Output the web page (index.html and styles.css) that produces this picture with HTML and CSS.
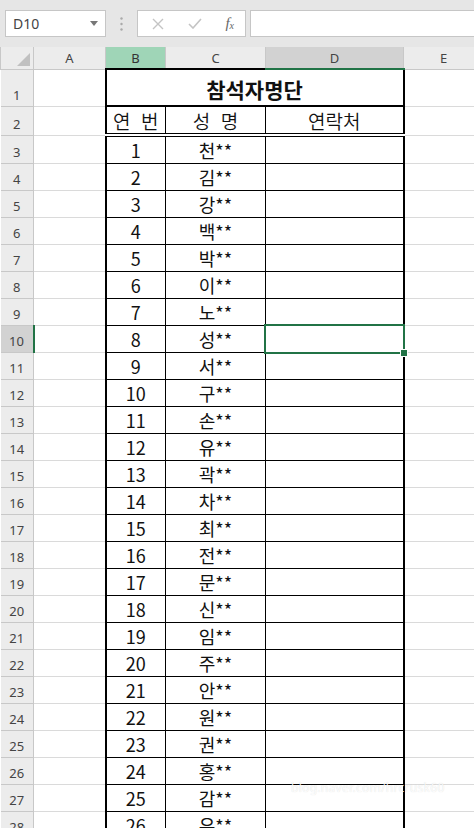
FILE: index.html
```html
<!DOCTYPE html>
<html lang="ko">
<head>
    <meta charset="UTF-8">
    <meta name="viewport" content="width=device-width, initial-scale=1.0">
    <title>참석자명단</title>
    <link rel="stylesheet" href="styles.css">
</head>
<body>

    <div class="toolbar">
        <div class="namebox">
            <span>D10</span>
            <svg class="dropdown" width="8" height="5" viewBox="0 0 8 5"><path d="M0 0h8L4 5z" fill="#777"/></svg>
        </div>
        <div class="grip">
            <svg width="3" height="14" viewBox="0 0 3 14"><circle cx="1.5" cy="1.5" r="1.2" fill="#aaa"/><circle cx="1.5" cy="7" r="1.2" fill="#aaa"/><circle cx="1.5" cy="12.5" r="1.2" fill="#aaa"/></svg>
        </div>
        <div class="fx-buttons">
            <svg width="12" height="12" viewBox="0 0 12 12"><path d="M1 1l10 10M11 1L1 11" stroke="#c4c4c4" stroke-width="1.4"/></svg>
            <svg width="14" height="11" viewBox="0 0 14 11"><path d="M1 6l4 4 8-9" stroke="#c4c4c4" stroke-width="1.6" fill="none"/></svg>
            <span class="fx">f<sub>x</sub></span>
        </div>
        <div class="formula"></div>
    </div>

    <table class="sheet">
        <colgroup>
            <col class="c-head">
            <col class="c-a">
            <col class="c-b">
            <col class="c-c">
            <col class="c-d">
            <col class="c-e">
        </colgroup>
        <thead>
            <tr>
                <th class="corner"><span class="tri"></span></th>
                <th>A</th>
                <th class="col-sel">B</th>
                <th>C</th>
                <th class="col-active">D</th>
                <th>E</th>
            </tr>
        </thead>
        <tbody>
            <tr class="r-title">
                <th>1</th><td></td>
                <td colspan="3" class="title">참석자명단</td>
                <td></td>
            </tr>
            <tr class="r-head">
                <th>2</th><td></td>
                <td class="t-left">연&nbsp;&nbsp;번</td><td class="t-mid">성&nbsp;&nbsp;명</td><td class="t-right">연락처</td>
                <td></td>
            </tr>
            <tr><th>3</th><td></td><td class="t-left">1</td><td class="t-mid">천**</td><td class="t-right"></td><td></td></tr>
            <tr><th>4</th><td></td><td class="t-left">2</td><td class="t-mid">김**</td><td class="t-right"></td><td></td></tr>
            <tr><th>5</th><td></td><td class="t-left">3</td><td class="t-mid">강**</td><td class="t-right"></td><td></td></tr>
            <tr><th>6</th><td></td><td class="t-left">4</td><td class="t-mid">백**</td><td class="t-right"></td><td></td></tr>
            <tr><th>7</th><td></td><td class="t-left">5</td><td class="t-mid">박**</td><td class="t-right"></td><td></td></tr>
            <tr><th>8</th><td></td><td class="t-left">6</td><td class="t-mid">이**</td><td class="t-right"></td><td></td></tr>
            <tr><th>9</th><td></td><td class="t-left">7</td><td class="t-mid">노**</td><td class="t-right"></td><td></td></tr>
            <tr><th class="row-active">10</th><td></td><td class="t-left">8</td><td class="t-mid">성**</td><td class="t-right selected"></td><td></td></tr>
            <tr><th>11</th><td></td><td class="t-left">9</td><td class="t-mid">서**</td><td class="t-right"></td><td></td></tr>
            <tr><th>12</th><td></td><td class="t-left">10</td><td class="t-mid">구**</td><td class="t-right"></td><td></td></tr>
            <tr><th>13</th><td></td><td class="t-left">11</td><td class="t-mid">손**</td><td class="t-right"></td><td></td></tr>
            <tr><th>14</th><td></td><td class="t-left">12</td><td class="t-mid">유**</td><td class="t-right"></td><td></td></tr>
            <tr><th>15</th><td></td><td class="t-left">13</td><td class="t-mid">곽**</td><td class="t-right"></td><td></td></tr>
            <tr><th>16</th><td></td><td class="t-left">14</td><td class="t-mid">차**</td><td class="t-right"></td><td></td></tr>
            <tr><th>17</th><td></td><td class="t-left">15</td><td class="t-mid">최**</td><td class="t-right"></td><td></td></tr>
            <tr><th>18</th><td></td><td class="t-left">16</td><td class="t-mid">전**</td><td class="t-right"></td><td></td></tr>
            <tr><th>19</th><td></td><td class="t-left">17</td><td class="t-mid">문**</td><td class="t-right"></td><td></td></tr>
            <tr><th>20</th><td></td><td class="t-left">18</td><td class="t-mid">신**</td><td class="t-right"></td><td></td></tr>
            <tr><th>21</th><td></td><td class="t-left">19</td><td class="t-mid">임**</td><td class="t-right"></td><td></td></tr>
            <tr><th>22</th><td></td><td class="t-left">20</td><td class="t-mid">주**</td><td class="t-right"></td><td></td></tr>
            <tr><th>23</th><td></td><td class="t-left">21</td><td class="t-mid">안**</td><td class="t-right"></td><td></td></tr>
            <tr><th>24</th><td></td><td class="t-left">22</td><td class="t-mid">원**</td><td class="t-right"></td><td></td></tr>
            <tr><th>25</th><td></td><td class="t-left">23</td><td class="t-mid">권**</td><td class="t-right"></td><td></td></tr>
            <tr><th>26</th><td></td><td class="t-left">24</td><td class="t-mid">홍**</td><td class="t-right"></td><td></td></tr>
            <tr><th>27</th><td></td><td class="t-left">25</td><td class="t-mid">감**</td><td class="t-right"></td><td></td></tr>
            <tr><th>28</th><td></td><td class="t-left">26</td><td class="t-mid">유**</td><td class="t-right"></td><td></td></tr>
        </tbody>
    </table>

    <div class="watermark">blog.naver.com/hrcrusk60</div>

</body>
</html>
```

FILE: styles.css
```css
body {
    margin: 0;
    width: 474px;
    height: 828px;
    overflow: hidden;
    background: #fff;
    font-family: "Noto Sans", "Noto Sans CJK KR", sans-serif;
    position: relative;
}

/* formula bar */
.toolbar {
    display: flex;
    align-items: flex-start;
    height: 47px;
    box-sizing: border-box;
    padding: 10px 0 0 5px;
    background: #e6e6e6;
}

.namebox {
    width: 101px;
    height: 27px;
    box-sizing: border-box;
    border: 1px solid #c6c6c6;
    background: #fff;
    display: flex;
    align-items: center;
    justify-content: space-between;
    padding: 0 7px 0 7px;
    font-size: 14px;
    color: #444;
}

.grip {
    width: 31px;
    height: 27px;
    display: flex;
    align-items: center;
    justify-content: center;
}

.fx-buttons {
    width: 109px;
    height: 27px;
    box-sizing: border-box;
    border: 1px solid #c6c6c6;
    background: #fff;
    display: flex;
    align-items: center;
    justify-content: space-between;
    padding: 0 11px 0 14px;
}

.fx {
    font-family: "Liberation Serif", serif;
    font-style: italic;
    font-size: 15px;
    color: #666;
}

.fx sub {
    font-size: 10px;
    vertical-align: -1px;
}

.formula {
    flex: 1;
    height: 27px;
    box-sizing: border-box;
    margin-left: 4px;
    border: 1px solid #c6c6c6;
    border-right: none;
    background: #fff;
}

/* grid */
.sheet {
    border-collapse: collapse;
    table-layout: fixed;
    width: 483px;
}

.c-head { width: 33px; }
.c-a { width: 72px; }
.c-b { width: 60px; }
.c-c { width: 100px; }
.c-d { width: 138px; }
.c-e { width: 80px; }

.sheet th {
    background: #ececec;
    color: #444;
    font-weight: normal;
    font-size: 13px;
    border: 1px solid #c8c8c8;
    padding: 0;
}

.sheet thead th {
    height: 21px;
    text-align: center;
    vertical-align: middle;
    border-top: none;
}

.sheet tbody th {
    text-align: center;
    vertical-align: bottom;
    line-height: 22px;
    border-left: none;
}

.sheet thead th.col-sel {
    background: #9fd5b7;
    color: #333;
}

.sheet thead th.col-active {
    background: #d2d2d2;
    border-bottom: 2px solid #217346;
}

.sheet tbody th.row-active {
    background: #d2d2d2;
    border-right: 2px solid #217346;
}

.corner {
    position: relative;
}

.tri {
    position: absolute;
    right: 3px;
    bottom: 3px;
    width: 0;
    height: 0;
    border-left: 13px solid transparent;
    border-bottom: 13px solid #c0c0c0;
}

.sheet td {
    height: 26px;
    border: 1px solid #dadada;
    padding: 0;
    text-align: center;
    vertical-align: bottom;
    font-family: "Noto Sans CJK KR", sans-serif;
    font-size: 18px;
    line-height: 25px;
    color: #111;
    white-space: nowrap;
}

.sheet tr.r-title td { height: 35px; }
.sheet tr.r-head td { height: 26px; }

.sheet td.title {
    font-weight: bold;
    font-size: 21px;
    line-height: 32px;
    border: 2px solid #000;
}

.sheet td.t-left {
    border: 1px solid #000;
    border-left: 2px solid #000;
}

.sheet td.t-mid {
    border: 1px solid #000;
}

.sheet td.t-right {
    border: 1px solid #000;
    border-right: 2px solid #000;
}

.sheet tr.r-head td.t-left,
.sheet tr.r-head td.t-mid,
.sheet tr.r-head td.t-right {
    border-bottom: 4px double #000;
    font-size: 19px;
    font-weight: 350;
}

.selected {
    position: relative;
}

.selected::after {
    content: '';
    position: absolute;
    left: -2px;
    top: -2px;
    right: -2px;
    bottom: -2px;
    border: 2px solid #217346;
}

.selected::before {
    content: '';
    position: absolute;
    right: -5px;
    bottom: -5px;
    width: 6px;
    height: 6px;
    background: #217346;
    border: 1px solid #fff;
    z-index: 1;
}

.watermark {
    position: absolute;
    left: 291px;
    top: 779px;
    font-size: 12px;
    color: rgba(255, 255, 255, 0.9);
    text-shadow: 0 0 1px rgba(0, 0, 0, 0.15);
    letter-spacing: 0.3px;
}
```
